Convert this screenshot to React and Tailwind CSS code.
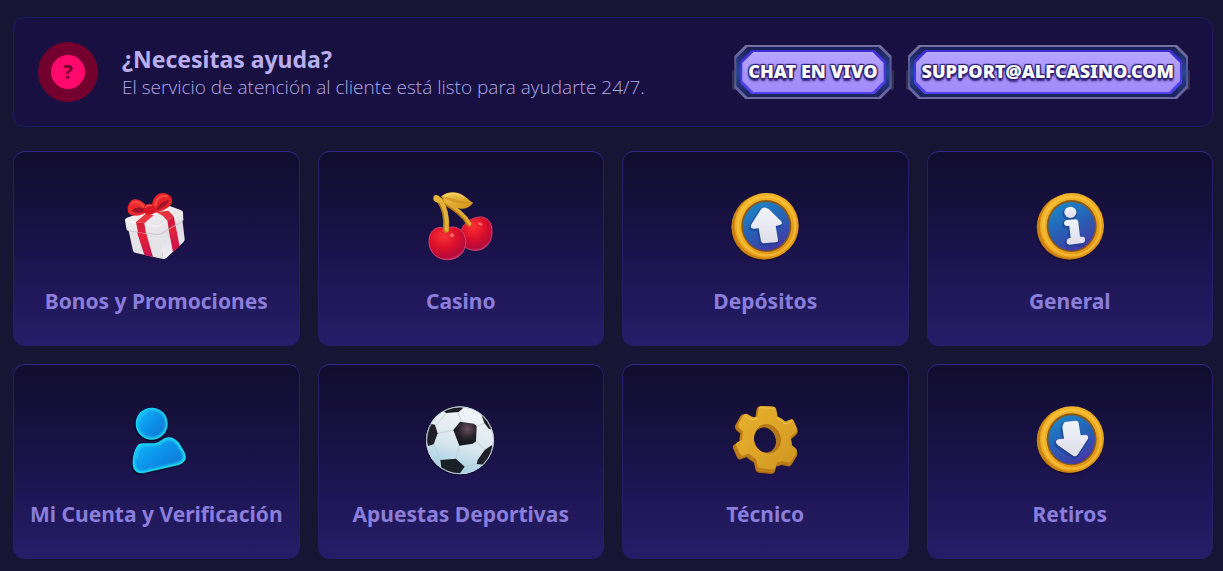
import React from 'react';

function GiftIcon() {
  return (
    <svg viewBox="4 3 270 270" className="size-[90px]" aria-hidden="true">
      <defs>
        <linearGradient id="giftTop" x1="0" y1="0" x2="1" y2="1">
          <stop offset="0" stopColor="#f4f1f2" />
          <stop offset="1" stopColor="#e2dfe4" />
        </linearGradient>
        <linearGradient id="giftSide" x1="0" y1="0" x2="0" y2="1">
          <stop offset="0" stopColor="#d9d6dd" />
          <stop offset="1" stopColor="#f2eff3" />
        </linearGradient>
        <linearGradient id="giftRibbon" x1="0" y1="0" x2="0" y2="1">
          <stop offset="0" stopColor="#ea2436" />
          <stop offset="1" stopColor="#c41350" />
        </linearGradient>
      </defs>
      <path d="M58 155L72 214Q74 220 82 222L158 238Q165 240 172 235L222 190Q228 185 227 177L218 121L140 152Z" fill="#0c0828" opacity=".6" />
      <path d="M56 148L70 212Q72 217 79 219L160 237L154 158Z" fill="#e6e3e8" />
      <path d="M150 158L160 237Q165 238 170 234L221 187Q226 182 225 176L218 118Z" fill="url(#giftSide)" />
      <path d="M82 157L110 161L130 231L104 225Z" fill="url(#giftRibbon)" />
      <path d="M176 145L197 133L210 199L190 217Z" fill="url(#giftRibbon)" />
      <path d="M46 120Q46 115 52 113L160 75Q169 72 178 77L215 91Q220 93 220 98L221 117Q221 122 216 125L154 161Q148 164 141 163L58 153Q52 151 50 145Z" fill="url(#giftTop)" />
      <path d="M50 147Q52 152 58 153L141 163Q148 164 154 161L216 125Q221 122 221 117" fill="none" stroke="#bdb8c6" strokeWidth="2" />
      <path d="M47 123L139 139Q146 140 151 137L219 97" fill="none" stroke="#fff" strokeWidth="2" />
      <path d="M79 126L104 130L109 160L85 157Z" fill="#d91f3b" />
      <path d="M79 126L110 100L132 106L104 130Z" fill="#e93742" />
      <path d="M140 96L176 92L192 109L173 122L160 108Z" fill="#e3323e" />
      <path d="M173 122L192 109L197 134L177 147Z" fill="#d11a3c" />
      <path d="M108 98C92 108 66 112 56 98C50 85 57 66 69 59C85 54 99 64 111 78Z" fill="#ea2a2c" />
      <path d="M105 94C94 100 76 101 66 93C72 82 88 80 104 86Z" fill="#a3142b" />
      <path d="M66 70C79 61 94 69 106 83" fill="none" stroke="#fa4a40" strokeWidth="6" strokeLinecap="round" />
      <path d="M126 80C128 52 143 38 162 39C180 42 190 53 187 68C183 82 158 93 134 99Z" fill="#e42328" />
      <path d="M139 90C146 74 160 63 177 60C178 71 161 84 139 91Z" fill="#a3142b" />
      <path d="M137 75C138 57 153 44 172 49" fill="none" stroke="#fa4a40" strokeWidth="6" strokeLinecap="round" />
      <path d="M103 79Q115 67 128 74L139 91Q139 99 126 103Q112 107 101 97Z" fill="#d91424" />
      <path d="M107 82Q115 73 126 77" fill="none" stroke="#f95449" strokeWidth="4" strokeLinecap="round" />
    </svg>
  );
}

function CherryIcon() {
  return (
    <svg viewBox="4 3 270 270" className="size-[90px]" aria-hidden="true">
      <defs>
        <radialGradient id="cherry" cx=".4" cy=".28" r=".75">
          <stop offset="0" stopColor="#f93236" />
          <stop offset=".5" stopColor="#dc0f2a" />
          <stop offset=".88" stopColor="#b50a3c" />
          <stop offset="1" stopColor="#d23a78" />
        </radialGradient>
        <linearGradient id="cherryGold" x1="0" y1="0" x2="1" y2="1">
          <stop offset="0" stopColor="#f7cf55" />
          <stop offset="1" stopColor="#cf8f16" />
        </linearGradient>
      </defs>
      <path d="M188 112C216 105 235 128 232 160C230 192 208 212 182 211C159 211 139 199 138 171C136 143 153 119 188 112Z" fill="url(#cherry)" stroke="#d8406a" strokeWidth="3" />
      <path d="M93 146C120 132 150 148 153 182C155 215 132 238 101 239C66 239 42 217 43 181C44 151 68 135 93 146Z" fill="url(#cherry)" stroke="#d8406a" strokeWidth="3" />
      <ellipse cx="112" cy="166" rx="6" ry="6" fill="#ff8f86" opacity=".7" />
      <ellipse cx="197" cy="132" rx="7" ry="4" fill="#ff8f86" opacity=".6" transform="rotate(25 197 132)" />
      <path d="M84 64C111 79 145 99 163 132" fill="none" stroke="#b77a12" strokeWidth="15" strokeLinecap="round" />
      <path d="M85 61C112 76 147 97 165 131" fill="none" stroke="#e0ab33" strokeWidth="10" strokeLinecap="round" />
      <path d="M74 60C91 83 97 109 94 150" fill="none" stroke="#b97c12" strokeWidth="18" strokeLinecap="round" />
      <path d="M76 60C93 83 99 109 96 149" fill="none" stroke="#e2b03c" strokeWidth="12" strokeLinecap="round" />
      <path d="M61 46Q69 43 76 52L83 61Q82 70 71 68Q58 67 56 58Q55 48 61 46Z" fill="#e8b436" />
      <path d="M79 50C96 34 126 33 145 46C159 55 167 65 175 68C167 82 147 89 129 85C106 83 99 63 79 50Z" fill="url(#cherryGold)" />
      <path d="M83 51C109 49 132 65 170 68C139 73 108 68 83 51Z" fill="#c78b18" opacity=".65" />
      <path d="M91 48C109 36 132 41 146 51" fill="none" stroke="#ffe07a" strokeWidth="3" strokeLinecap="round" />
    </svg>
  );
}

function Coin({ id, viewBox, dy = 0, children }) {
  return (
    <svg viewBox={viewBox} className="size-[90px]" aria-hidden="true">
      <defs>
        <linearGradient id={`${id}-rim`} x1=".15" y1="0" x2=".85" y2="1">
          <stop offset="0" stopColor="#f0b52c" />
          <stop offset=".55" stopColor="#eda81f" />
          <stop offset="1" stopColor="#d98e14" />
        </linearGradient>
        <linearGradient id={`${id}-face`} x1=".2" y1="0" x2=".7" y2="1">
          <stop offset="0" stopColor="#1b86c8" />
          <stop offset=".5" stopColor="#2860b4" />
          <stop offset="1" stopColor="#4536a6" />
        </linearGradient>
        <linearGradient id={`${id}-mark`} x1="0" y1="0" x2="0" y2="1">
          <stop offset="0" stopColor="#f1f4fa" />
          <stop offset="1" stopColor="#dedde9" />
        </linearGradient>
      </defs>
      <g transform={`translate(0 ${dy})`}>
        <ellipse cx="132" cy="146" rx="99" ry="98" fill="#0b0727" opacity=".5" />
        <ellipse cx="133" cy="142" rx="98" ry="97" fill="#a65d0b" />
        <ellipse cx="134" cy="140" rx="98" ry="98" fill="#cb8214" />
        <ellipse cx="141" cy="137" rx="96" ry="98" fill={`url(#${id}-rim)`} />
        <ellipse cx="141" cy="138" rx="86" ry="88" fill="none" stroke="#fcc945" strokeWidth="7" opacity=".6" />
        <ellipse cx="140" cy="138" rx="75" ry="78" fill="#8a5714" />
        <ellipse cx="140" cy="139" rx="70" ry="73" fill={`url(#${id}-face)`} />
        <g stroke="#153c87" strokeWidth="8" strokeLinejoin="round" opacity=".5" transform="translate(-2 4)">
          {children}
        </g>
        <g fill={`url(#${id}-mark)`}>{children}</g>
      </g>
    </svg>
  );
}

const UpIcon = () => (
  <Coin id="coin-up" viewBox="1 3 270 270">
    <path d="M125 86Q135 78 147 87L184 123Q191 132 181 135L168 138L175 179Q176 186 168 187L132 190Q125 190 124 183L117 145L103 146Q91 146 94 136Q95 132 100 125Z" />
  </Coin>
);

const InfoIcon = () => (
  <Coin id="coin-info" viewBox="0 3 270 270">
    <ellipse cx="136" cy="97" rx="18" ry="17" />
    <path d="M125 120L151 118Q159 118 160 126L165 170L173 170Q180 170 180 178Q181 188 173 189L134 194Q126 195 125 187Q125 177 132 175L137 174L133 138L126 138Q117 137 117 129Q118 121 125 120Z" />
  </Coin>
);

const DownIcon = () => (
  <Coin id="coin-down" viewBox="0 -3 270 270" dy={-5}>
    <path d="M115 92Q116 86 123 85L153 82Q160 82 161 89L167 126L181 124Q192 126 189 136L158 184Q151 192 142 186L98 155Q89 146 96 140L100 138L117 136L112 101Z" />
  </Coin>
);

function UserIcon() {
  return (
    <svg viewBox="-11 -3 270 270" className="size-[90px]" aria-hidden="true">
      <defs>
        <linearGradient id="userFill" x1="0" y1=".1" x2="1" y2=".9">
          <stop offset="0" stopColor="#12b9fb" />
          <stop offset=".55" stopColor="#078ee6" />
          <stop offset="1" stopColor="#0879d4" />
        </linearGradient>
        <linearGradient id="userRim" x1="0" y1="0" x2="1" y2="1">
          <stop offset="0" stopColor="#19d0f6" />
          <stop offset="1" stopColor="#28e0ec" />
        </linearGradient>
        <filter id="userGlow" x="-10%" y="-10%" width="120%" height="120%">
          <feGaussianBlur stdDeviation="3" />
        </filter>
      </defs>
      <g fill="#05071f" opacity=".8" transform="translate(-3 4)">
        <circle cx="111" cy="86" r="48" />
        <path d="M72 148C89 139 122 153 140 136C157 121 176 124 192 142L209 170C219 191 211 203 190 211L88 234C67 239 55 225 54 208C53 184 61 158 72 148Z" />
      </g>
      <g fill="url(#userRim)">
        <circle cx="111" cy="86" r="48" />
        <path d="M72 148C89 139 122 153 140 136C157 121 176 124 192 142L209 170C219 191 211 203 190 211L88 234C67 239 55 225 54 208C53 184 61 158 72 148Z" />
      </g>
      <g fill="url(#userFill)" filter="url(#userGlow)">
        <circle cx="111" cy="86" r="42" />
        <path d="M77 154C95 147 123 160 144 142C159 130 173 132 186 148L202 173C208 190 205 196 187 204L88 227C72 231 62 220 61 207C60 188 67 162 77 154Z" />
      </g>
      <path d="M75 79Q80 59 95 54M67 191Q66 172 79 158" fill="none" stroke="#3fd5ff" strokeWidth="3" strokeLinecap="round" opacity=".6" />
    </svg>
  );
}

function BallIcon() {
  return (
    <svg viewBox="4 -3 270 270" className="size-[90px]" aria-hidden="true">
      <defs>
        <linearGradient id="ballBase" x1=".6" y1="0" x2=".3" y2="1">
          <stop offset="0" stopColor="#f3f6f7" />
          <stop offset=".55" stopColor="#d9e7ee" />
          <stop offset="1" stopColor="#9ccbe2" />
        </linearGradient>
        <radialGradient id="ballPatch" cx=".6" cy=".3" r=".8">
          <stop offset="0" stopColor="#67505f" />
          <stop offset=".5" stopColor="#26222a" />
          <stop offset="1" stopColor="#0c0e15" />
        </radialGradient>
        <clipPath id="ballClip">
          <circle cx="136" cy="136" r="101" />
        </clipPath>
      </defs>
      <circle cx="134" cy="139" r="103" fill="#0b0727" opacity=".6" />
      <circle cx="136" cy="136" r="102" fill="url(#ballBase)" />
      <g clipPath="url(#ballClip)">
        <path d="M128 51L140 77M95 54L64 91M69 115L116 105M57 148L79 195M134 152L124 191M184 139L211 165M186 94L210 84M150 215L186 207M148 37Q175 38 198 53" fill="none" stroke="#b9c6cc" strokeWidth="2" />
        <path d="M116 105L136 80L178 86L186 94L184 139L174 146L134 152Z" fill="url(#ballPatch)" />
        <path d="M84 47L104 35L137 31L148 37L132 51L95 54Z" fill="#1c1d23" />
        <path d="M198 53L219 69L240 106L222 101L209 84Z" fill="#232228" />
        <path d="M31 105L47 86L61 89L69 115L57 148L40 153L32 130Z" fill="#202128" />
        <path d="M77 195L124 191L150 215L132 240L90 227L80 218Z" fill="#1a2028" />
        <path d="M189 195L210 165L232 150L239 170L213 210L186 207Z" fill="#202128" />
      </g>
      <circle cx="136" cy="136" r="100" fill="none" stroke="#c5d4dc" strokeWidth="3" opacity=".9" />
    </svg>
  );
}

function GearIcon() {
  const gear =
    'M112 43Q113 35 121 34L158 35Q166 36 168 43L172 66Q186 73 197 83L213 76Q219 73 222 78L234 105Q236 112 231 116L213 132Q218 144 217 157L230 168Q235 173 233 179L216 207Q212 213 204 211L187 207Q177 212 170 211L167 226Q165 234 157 234L118 230Q111 229 109 222L104 200Q92 194 82 184L65 190Q58 192 54 186L42 159Q39 152 46 148L62 139Q59 128 64 115L51 103Q46 98 48 91L63 64Q67 57 75 58L92 68Q99 71 108 68Z';
  return (
    <svg viewBox="2 -3 270 270" className="size-[90px]" aria-hidden="true">
      <defs>
        <linearGradient id="gearFace" x1="0" y1="0" x2="1" y2="1">
          <stop offset="0" stopColor="#e8b02c" />
          <stop offset=".5" stopColor="#dea628" />
          <stop offset="1" stopColor="#cd9420" />
        </linearGradient>
        <mask id="gearHole">
          <rect width="280" height="270" fill="#fff" />
          <ellipse cx="137" cy="135" rx="32" ry="38" fill="#000" transform="rotate(-22 137 135)" />
        </mask>
      </defs>
      <g mask="url(#gearHole)">
        <path d={gear} fill="#a8650f" transform="translate(0 3)" />
        <path d={gear} fill="#bd7c18" />
        <path d={gear} fill="url(#gearFace)" transform="translate(11 1) scale(.95 .95)" />
        <ellipse cx="145" cy="131" rx="39" ry="45" fill="#b57719" transform="rotate(-22 145 131)" />
        <path d="M120 38L160 40M76 63L91 72Q101 76 113 70M174 70Q187 75 198 87L216 79" fill="none" stroke="#f5c552" strokeWidth="3" strokeLinecap="round" />
      </g>
    </svg>
  );
}

const topics = [
  { label: 'Bonos y Promociones', Icon: GiftIcon },
  { label: 'Casino', Icon: CherryIcon },
  { label: 'Depósitos', Icon: UpIcon },
  { label: 'General', Icon: InfoIcon },
  { label: 'Mi Cuenta y Verificación', Icon: UserIcon },
  { label: 'Apuestas Deportivas', Icon: BallIcon },
  { label: 'Técnico', Icon: GearIcon },
  { label: 'Retiros', Icon: DownIcon },
];

const octagon =
  '[clip-path:polygon(11px_0,calc(100%-11px)_0,100%_11px,100%_calc(100%-11px),calc(100%-11px)_100%,11px_100%,0_calc(100%-11px),0_11px)]';

function FrameFace({ children }) {
  return (
    <>
      <span className="absolute top-[25px] -left-0.5 h-5 w-1 rounded-sm bg-[#34324f]" />
      <span className="absolute top-[25px] -right-0.5 h-5 w-1 rounded-sm bg-[#34324f]" />
      <span className={`relative block bg-linear-to-b from-[#78719f] via-[#514f91] to-[#706aa5] p-0.5 ${octagon}`}>
        <span className={`block bg-linear-to-b from-[#1a2056] via-[#26479a] to-[#1a2258] px-1 py-[3px] ${octagon}`}>
          <span className={`block bg-linear-to-b from-[#3d2bd0] to-[#5142ee] p-0.5 ${octagon}`}>
            <span className={`flex h-10 items-center justify-center bg-linear-to-b from-[#b9a8ff] via-[#a795f6] to-[#a08bfb] px-1.5 ${octagon}`}>
              <span className="pb-0.5 text-[18px] leading-6 font-black whitespace-nowrap text-white [text-shadow:-1px_-1px_1px_#2a1c70,1px_-1px_1px_#2a1c70,-1px_1px_1px_#2a1c70,1px_1px_1px_#2a1c70,0_3px_2px_#2a1c70]">
                {children}
              </span>
            </span>
          </span>
        </span>
      </span>
    </>
  );
}

export default function App() {
  return (
    <div className="min-h-screen bg-[#181433] pt-[17px] pr-2.5 pb-3 pl-[13px] font-['Noto_Sans',sans-serif]">
      <section className="flex min-h-[110px] flex-wrap items-center gap-6 rounded-xl border border-[#211960] bg-[#181041] px-6">
        <div className="flex size-[60px] shrink-0 items-center justify-center rounded-full bg-[#74002d]">
          <div className="flex size-[34px] items-center justify-center rounded-full bg-[#ff0a6c] text-[20px] leading-6 font-bold text-[#74002d]">
            ?
          </div>
        </div>
        <div className="min-w-0 flex-1 pb-0.5">
          <h1 className="text-[23px] leading-8 font-bold text-[#b9aef0]">¿Necesitas ayuda?</h1>
          <p className="font-['Open_Sans',sans-serif] text-[19px] leading-6 font-light text-[#b0a7e6]">
            El servicio de atención al cliente está listo para ayudarte 24/7.
          </p>
        </div>
        <div className="flex shrink-0 gap-4">
          <button type="button" className="relative cursor-pointer">
            <FrameFace>CHAT EN VIVO</FrameFace>
          </button>
          <a href="mailto:support@alfcasino.com" className="relative block">
            <FrameFace>SUPPORT@ALFCASINO.COM</FrameFace>
          </a>
        </div>
      </section>

      <nav aria-label="Temas de ayuda" className="mt-6 grid grid-cols-4 gap-[18px]">
        {topics.map(({ label, Icon }) => (
          <a
            key={label}
            href="#"
            className="flex min-h-[195px] flex-col items-center rounded-xl border border-[#261d69] border-t-[#33278a] bg-linear-to-b from-[#120d2e] via-[#1a134a] to-[#261d69] px-2 pt-[29px]"
          >
            <Icon />
            <span className="mt-3.5 text-center text-[21px] leading-8 font-bold text-[#8b7edb]">{label}</span>
          </a>
        ))}
      </nav>
    </div>
  );
}
